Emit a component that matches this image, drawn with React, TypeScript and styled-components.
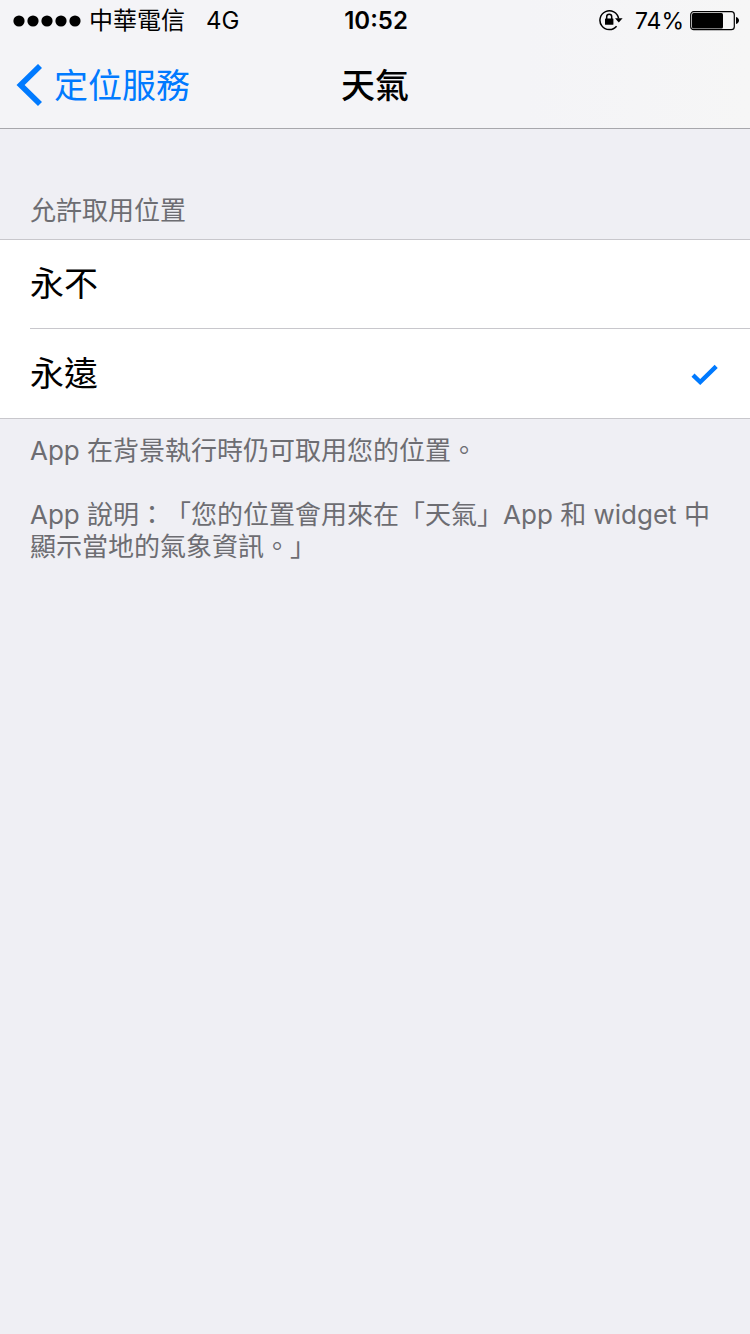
import React, { useState } from "react";
import styled, { createGlobalStyle } from "styled-components";

const GlobalStyle = createGlobalStyle`
  * { box-sizing: border-box; }
  body {
    margin: 0;
    background: #efeff4;
    color: #000;
    font-family: Inter, "Noto Sans CJK TC", sans-serif;
    font-weight: 400;
    text-spacing-trim: space-all;
  }
`;

const Header = styled.header`
  background: linear-gradient(90deg, #f4f4f7 0%, #f4f4f7 70%, #f6f6f6 100%);
  border-bottom: 1px solid #a7a7ac;
`;

const StatusBar = styled.div`
  display: grid;
  grid-template-columns: 1fr auto 1fr;
  align-items: center;
  height: 42px;
  padding: 0 11px 0 13px;
  font-size: 24px;
  line-height: 42px;
`;

const StatusGroup = styled.div<{ $end?: boolean }>`
  display: flex;
  align-items: center;
  justify-content: ${(p) => (p.$end ? "flex-end" : "flex-start")};
`;

const Signal = styled.svg`
  margin-right: 8px;
`;

const Network = styled.span`
  margin-left: 21px;
`;

const Clock = styled.time`
  font-weight: 600;
`;

const Percent = styled.span`
  margin: 0 6px 0 12px;
  font-size: 23px;
`;

const NavBar = styled.nav`
  display: grid;
  grid-template-columns: 1fr auto 1fr;
  align-items: center;
  height: 86px;
  padding: 0 16px;
`;

const BackLink = styled.a`
  display: flex;
  align-items: center;
  gap: 11px;
  color: #007aff;
  font-size: 34px;
  line-height: 88px;
  text-decoration: none;
`;

const Title = styled.h1`
  margin: 0;
  font-size: 34px;
  font-weight: 500;
  line-height: 88px;
`;

const Group = styled.fieldset`
  min-width: 0;
  margin: 0;
  padding: 65px 0 0;
  border: 0;
`;

const GroupLabel = styled.legend`
  float: left;
  width: 100%;
  padding: 0 30px 11px;
  color: #6d6d72;
  font-size: 26px;
  line-height: 34px;
`;

const Options = styled.div`
  clear: both;
  padding-left: 30px;
  background: #fff;
  border: solid #c8c7cc;
  border-width: 1px 0;
`;

const Option = styled.label`
  display: flex;
  align-items: center;
  justify-content: space-between;
  height: 88px;
  padding-right: 32px;
  font-size: 34px;
  line-height: 86px;

  & + & {
    height: 90px;
    border-top: 1px solid #c8c7cc;
  }
`;

const Radio = styled.input`
  position: absolute;
  appearance: none;
  margin: 0;
  opacity: 0;
`;

const Notes = styled.div`
  padding: 16px 30px;
  color: #6d6d72;
  font-size: 26px;
  line-height: 32px;
`;

const Note = styled.p`
  margin: 0 0 32px;
`;

const SignalDots = () => (
  <Signal width="68" height="12" viewBox="0 0 68 12" aria-hidden="true">
    {[6, 20, 34, 48, 62].map((x) => (
      <circle key={x} cx={x} cy="6" r="5.6" />
    ))}
  </Signal>
);

const RotationLock = () => (
  <svg width="24" height="24" viewBox="0 0 24 24" fill="none" aria-hidden="true">
    <path d="M17.6 17.2A9.4 9.4 0 1 1 19.6 9.5" stroke="#000" strokeWidth="1.5" />
    <path d="M16 9.2h7.6l-3.8 4.2z" fill="#000" />
    <rect x="6" y="9.4" width="8.4" height="6.4" rx=".6" fill="#000" />
    <path d="M7.7 10V7.7a2.5 2.5 0 0 1 5 0V10" stroke="#000" strokeWidth="1.5" />
  </svg>
);

const Battery = () => (
  <svg width="49" height="20" viewBox="0 0 49 20" aria-hidden="true">
    <rect x=".7" y=".7" width="43.6" height="18" rx="3" fill="none" stroke="#000" strokeWidth="1.2" />
    <rect x="2" y="2" width="31" height="15.4" rx="1.5" />
    <path d="M46 6c2 .6 3 2 3 3.5s-1 2.9-3 3.5z" />
  </svg>
);

const Chevron = () => (
  <svg width="27" height="44" viewBox="0 0 27 44" fill="none" aria-hidden="true">
    <path d="M24 2 4.6 21 24 40" stroke="#007aff" strokeWidth="5.7" />
  </svg>
);

const Check = () => (
  <svg width="27" height="22" viewBox="0 0 27 22" fill="none" aria-hidden="true">
    <path d="M2 12.2 9.2 19 25.2 3.4" stroke="#007aff" strokeWidth="4.4" />
  </svg>
);

const choices = [
  { value: "never", label: "永不" },
  { value: "always", label: "永遠" },
];

export default function App() {
  const [access, setAccess] = useState("always");

  return (
    <>
      <GlobalStyle />
      <Header lang="zh-Hant">
        <StatusBar>
          <StatusGroup>
            <SignalDots />
            <span>中華電信</span>
            <Network>4G</Network>
          </StatusGroup>
          <Clock>10:52</Clock>
          <StatusGroup $end>
            <RotationLock />
            <Percent>74%</Percent>
            <Battery />
          </StatusGroup>
        </StatusBar>
        <NavBar>
          <BackLink href="#location-services">
            <Chevron />
            定位服務
          </BackLink>
          <Title>天氣</Title>
        </NavBar>
      </Header>
      <main lang="zh-Hant">
        <Group>
          <GroupLabel>允許取用位置</GroupLabel>
          <Options>
            {choices.map(({ value, label }) => (
              <Option key={value}>
                <Radio
                  type="radio"
                  name="location-access"
                  value={value}
                  checked={access === value}
                  onChange={() => setAccess(value)}
                />
                {label}
                {access === value && <Check />}
              </Option>
            ))}
          </Options>
        </Group>
        <Notes>
          <Note>App 在背景執行時仍可取用您的位置。</Note>
          <Note>App 說明：「您的位置會用來在「天氣」App 和 widget 中顯示當地的氣象資訊。」</Note>
        </Notes>
      </main>
    </>
  );
}
